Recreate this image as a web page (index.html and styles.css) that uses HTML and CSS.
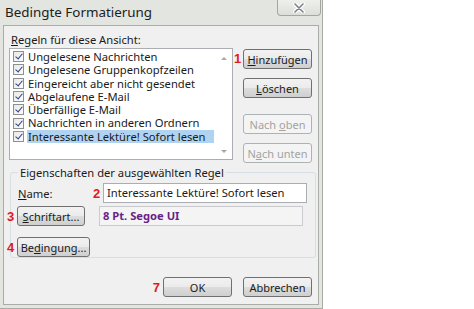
FILE: index.html
```html
<!DOCTYPE html>
<html lang="de">
<head>
    <meta charset="UTF-8">
    <title>Bedingte Formatierung</title>
    <link rel="stylesheet" href="styles.css">
</head>
<body>
    <div class="dialog">
        <div class="titlebar">
            <span class="title">Bedingte Formatierung</span>
            <button class="close-btn">
                <svg width="12" height="10" viewBox="0 0 12 10">
                    <path d="M2 1 L10 9 M10 1 L2 9" stroke="#fff" stroke-width="4" stroke-linecap="round"/>
                    <path d="M2 1 L10 9 M10 1 L2 9" stroke="#7b7f86" stroke-width="1.6" stroke-linecap="round"/>
                </svg>
            </button>
        </div>

        <div class="client">
            <div class="list-label"><u>R</u>egeln für diese Ansicht:</div>
            <div class="rules-row">
                <div class="listbox">
                    <ul class="rules">
                        <li><span class="check"></span>Ungelesene Nachrichten</li>
                        <li><span class="check"></span>Ungelesene Gruppenkopfzeilen</li>
                        <li><span class="check"></span>Eingereicht aber nicht gesendet</li>
                        <li><span class="check"></span>Abgelaufene E-Mail</li>
                        <li><span class="check"></span>Überfällige E-Mail</li>
                        <li><span class="check"></span>Nachrichten in anderen Ordnern</li>
                        <li class="selected"><span class="check"></span><span class="sel-text">Interessante Lektüre! Sofort lesen</span></li>
                    </ul>
                    <div class="scrollbar">
                        <span class="arrow up"></span>
                        <span class="arrow down"></span>
                    </div>
                </div>
                <div class="side-buttons">
                    <div class="marked"><span class="mark">1</span><button class="btn"><u>H</u>inzufügen</button></div>
                    <button class="btn"><u>L</u>öschen</button>
                    <button class="btn disabled">Nach <u>o</u>ben</button>
                    <button class="btn disabled">N<u>a</u>ch unten</button>
                </div>
            </div>

            <fieldset class="group">
                <legend>Eigenschaften der ausgewählten Regel</legend>
                <div class="prop-row">
                    <span class="prop-label"><u>N</u>ame:</span>
                    <span class="mark">2</span>
                    <div class="field">Interessante Lektüre! Sofort lesen</div>
                </div>
                <div class="prop-row">
                    <div class="left-btn"><span class="mark side">3</span><button class="btn font-btn"><u>S</u>chriftart...</button></div>
                    <div class="field readonly">8 Pt. Segoe UI</div>
                </div>
                <div class="prop-row cond">
                    <div class="left-btn"><span class="mark side">4</span><button class="btn cond-btn">Be<u>d</u>ingung...</button></div>
                </div>
            </fieldset>

            <div class="footer">
                <span class="mark">7</span>
                <button class="btn">OK</button>
                <button class="btn">Abbrechen</button>
            </div>
        </div>
    </div>
</body>
</html>
```

FILE: styles.css
```css
body {
    margin: 0;
    background: #fff;
    font-family: "Noto Sans", "Open Sans", sans-serif;
    font-size: 11.2px;
    color: #1a1a1a;
}
u {
    text-decoration: underline;
    text-underline-offset: 1px;
}
.dialog {
    width: 316px;
    height: 305px;
    padding: 0 3px 3px 3px;
    background: #e3e6e0;
    border-right: 1px solid #a9aca6;
    border-bottom: 1px solid #a9aca6;
    display: flex;
    flex-direction: column;
}
.titlebar {
    height: 25px;
    display: flex;
    justify-content: space-between;
    align-items: flex-start;
}
.title {
    font-size: 13.4px;
    padding: 3px 0 0 2px;
    color: #202020;
}
.close-btn {
    width: 44px;
    height: 16px;
    margin-right: -2px;
    border: 1px solid #a2a7a0;
    border-top: none;
    border-radius: 0 0 4px 4px;
    background: linear-gradient(#eef0ec, #dcdfd9);
    display: flex;
    align-items: center;
    justify-content: center;
    padding: 0;
}
.client {
    flex: 1;
    background: #f0f0f0;
    border: 1px solid #a9ada7;
    padding: 0 6px 0 5px;
    display: flex;
    flex-direction: column;
}
.list-label {
    height: 22px;
    line-height: 28px;
    padding-left: 2px;
}
.rules-row {
    display: flex;
}
.listbox {
    width: 222px;
    height: 110px;
    border: 1px solid #abadb3;
    background: #fff;
    display: flex;
}
.rules {
    list-style: none;
    margin: 0;
    padding: 1px 0 0 3px;
    flex: 1;
}
.rules li {
    height: 13.3px;
    line-height: 13.3px;
    display: flex;
    align-items: center;
    white-space: nowrap;
}
.check {
    width: 9px;
    height: 9px;
    border: 1px solid #8e8f8f;
    background: linear-gradient(135deg, #e8e8e8, #fbfbfb);
    margin-right: 4px;
    flex-shrink: 0;
    position: relative;
}
.check::after {
    content: "";
    position: absolute;
    left: 3px;
    top: 0;
    width: 3px;
    height: 6px;
    border-right: 1.6px solid #2b3f86;
    border-bottom: 1.6px solid #2b3f86;
    transform: rotate(40deg);
}
.selected .sel-text {
    background: #b0d3f1;
    flex: 1;
    margin-right: 2px;
    padding-left: 1px;
    margin-left: -1px;
}
.scrollbar {
    width: 16px;
    display: flex;
    flex-direction: column;
    justify-content: space-between;
    align-items: center;
    padding: 8px 0 6px;
}
.arrow {
    width: 0;
    height: 0;
    border-left: 3px solid transparent;
    border-right: 3px solid transparent;
}
.arrow.up { border-bottom: 3px solid #a8a8a8; }
.arrow.down { border-top: 3px solid #a8a8a8; }
.side-buttons {
    margin-left: 10px;
    padding-top: 1px;
    display: flex;
    flex-direction: column;
    gap: 9px;
}
.side-buttons .btn:nth-child(3) {
    margin-top: 7px;
}
.marked {
    position: relative;
}
.mark {
    color: #e0191e;
    font-weight: bold;
    font-size: 13px;
    font-family: "Liberation Sans", Arial, sans-serif;
}
.marked .mark {
    position: absolute;
    left: -9px;
    top: 2px;
}
.btn {
    width: 69px;
    height: 20px;
    border: 1px solid #707070;
    border-radius: 3px;
    background: linear-gradient(#f2f2f2 0%, #ebebeb 50%, #dddddd 51%, #cfcfcf 100%);
    font-family: inherit;
    font-size: 11px;
    color: #1a1a1a;
    padding: 0;
}
.btn.disabled {
    border-color: #adb2b5;
    background: #f4f4f4;
    color: #a3a3a3;
}
.group {
    margin: 2px 0 0 1px;
    width: 289px;
    height: 88px;
    border: 1px solid #d5dfe5;
    border-radius: 3px;
    padding: 3px 8px 0 6px;
}
.group legend {
    padding: 0 2px;
    margin-left: 1px;
}
.prop-row {
    display: flex;
    align-items: center;
    height: 20px;
    margin-bottom: 3px;
}
.prop-label {
    width: 75px;
    padding-left: 1px;
}
.prop-row .mark {
    width: 10px;
}
.field {
    width: 199px;
    height: 18px;
    border: 1px solid #abadb3;
    background: #fff;
    line-height: 18px;
    padding-left: 3px;
    white-space: nowrap;
    overflow: hidden;
}
.field.readonly {
    background: #f4f4f4;
    border-color: #c9cbcf;
    color: #6b1f86;
    font-weight: bold;
    margin-left: 14px;
}
.left-btn {
    position: relative;
    display: flex;
}
.left-btn .mark.side {
    position: absolute;
    left: -10px;
    top: 3px;
}
.font-btn { width: 68px; }
.cond-btn { width: 73px; }
.prop-row.cond {
    margin-top: 11px;
}
.footer {
    display: flex;
    justify-content: flex-end;
    align-items: center;
    gap: 11px;
    margin-top: 19px;
}
.footer .mark {
    margin-right: -8px;
}
```
